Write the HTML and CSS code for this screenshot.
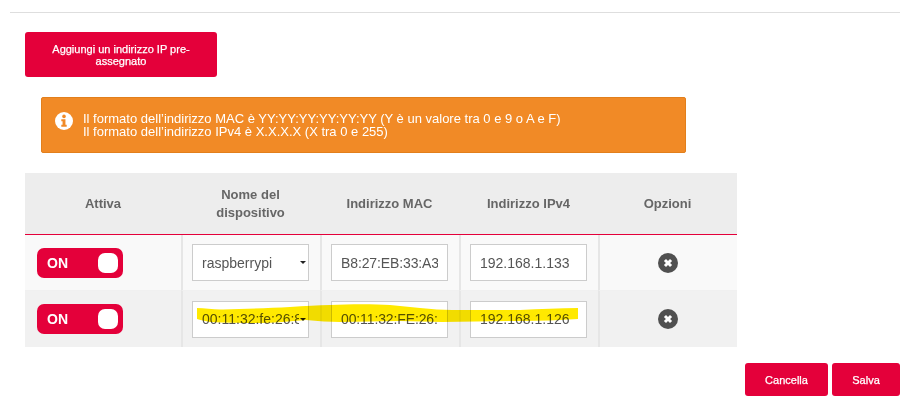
FILE: index.html
```html
<!DOCTYPE html>
<html lang="it">
<head>
<meta charset="utf-8">
<title>Indirizzi IP pre-assegnati</title>
<link rel="stylesheet" href="styles.css">
</head>
<body>
<div class="page">
  <hr class="rule">
  <button class="btn btn-add" type="button">Aggiungi un indirizzo IP pre-assegnato</button>
  <div class="alert">
    <svg class="alert-icon" viewBox="0 0 20 20" width="18" height="18" aria-hidden="true">
      <circle cx="10" cy="10" r="10" fill="#fff"/>
      <circle cx="10" cy="4.9" r="2" fill="#f18a26"/>
      <path d="M7 8h4.6v6.2H13V16.4H7v-2.2h1.4V10.2H7z" fill="#f18a26"/>
    </svg>
    <p class="alert-text">Il formato dell’indirizzo MAC è YY:YY:YY:YY:YY:YY (Y è un valore tra 0 e 9 o A e F)<br>Il formato dell’indirizzo IPv4 è X.X.X.X (X tra 0 e 255)</p>
  </div>
  <table class="devices">
    <colgroup>
      <col class="c-active"><col class="c-name"><col class="c-mac"><col class="c-ip"><col class="c-opt">
    </colgroup>
    <thead>
      <tr>
        <th>Attiva</th>
        <th>Nome del dispositivo</th>
        <th>Indirizzo MAC</th>
        <th>Indirizzo IPv4</th>
        <th>Opzioni</th>
      </tr>
    </thead>
    <tbody>
      <tr>
        <td class="cell-toggle"><span class="toggle"><span class="toggle-label">ON</span><span class="knob"></span></span></td>
        <td><span class="select-wrap"><select class="field field-select"><option>raspberrypi</option></select></span></td>
        <td><input class="field field-mac" type="text" value="B8:27:EB:33:A3"></td>
        <td><input class="field" type="text" value="192.168.1.133"></td>
        <td class="cell-opt"><svg class="remove" viewBox="0 0 20 20" width="20" height="20" aria-hidden="true"><circle cx="10" cy="10" r="10" fill="#505050"/><path d="M5.9 8 8 5.9l2 2 2-2L14.1 8l-2 2 2 2-2.1 2.1-2-2-2 2L5.9 12l2-2z" fill="#fff"/></svg></td>
      </tr>
      <tr>
        <td class="cell-toggle"><span class="toggle"><span class="toggle-label">ON</span><span class="knob"></span></span></td>
        <td><span class="select-wrap"><select class="field field-select"><option>00:11:32:fe:26:8f</option></select></span></td>
        <td><input class="field field-mac" type="text" value="00:11:32:FE:26:8F"></td>
        <td><input class="field" type="text" value="192.168.1.126"></td>
        <td class="cell-opt"><svg class="remove" viewBox="0 0 20 20" width="20" height="20" aria-hidden="true"><circle cx="10" cy="10" r="10" fill="#505050"/><path d="M5.9 8 8 5.9l2 2 2-2L14.1 8l-2 2 2 2-2.1 2.1-2-2-2 2L5.9 12l2-2z" fill="#fff"/></svg></td>
      </tr>
    </tbody>
  </table>
  <div class="actions">
    <button class="btn btn-cancel" type="button">Cancella</button>
    <button class="btn btn-save" type="button">Salva</button>
  </div>
  <svg class="marker" viewBox="0 0 909 417" width="909" height="417" aria-hidden="true">
    <path class="marker-stroke" d="M197 308C205 308 215 310 223 309.5 245 309 270 308 290 307 305 306 318 305 330 305 350 304 375 304 390 305 400 306 410 307 420 308 432 309 442 310 452 310 475 310 500 310 520 310 540 309 560 308 578 308L578 319C560 320 540 321 520 321 495 321 468 322 442 322 428 322 414 321 400 321 380 321 360 322 340 322 330 322 318 321 306 320 290 321 275 323 260 323 243 323 226 323 210 322 205 321 200 320 197 319Z"/>
  </svg>
</div>
</body>
</html>
```
FILE: styles.css
```css
* { box-sizing: border-box; }
html, body { margin: 0; background: #fff; }
body { font-family: "Liberation Sans", Arial, sans-serif; color: #666; }
.page { position: relative; width: 909px; height: 417px; padding: 12px 9px 0 10px; overflow: hidden; }
.rule { margin: 0; border: 0; border-top: 1px solid #dedede; height: 1px; }
.btn { border: 0; border-radius: 3px; background: #e4003a; color: #fff; font: 11px/12px "Liberation Sans", Arial, sans-serif; -webkit-text-stroke: .25px #fff; text-align: center; padding: 0; }
.btn-add { display: block; width: 192px; height: 45px; margin: 19px 0 0 15px; padding: 0 20px; }
.alert { display: flex; align-items: center; gap: 10px; width: 645px; height: 56px; margin: 20px 0 0 31px; padding: 0 13px; background: #f18a26; border: 1px solid #e27f1c; border-radius: 2px; color: #fff; }
.alert-icon { flex: none; margin-top: -9px; }
.alert-text { margin: 0; font-size: 13px; line-height: 13px; }
.devices { width: 712px; height: 174px; margin: 20px 0 0 15px; border-collapse: separate; border-spacing: 0; table-layout: fixed; font-size: 13px; }
.c-active { width: 156px; }
.c-name, .c-mac, .c-ip, .c-opt { width: 139px; }
.devices thead tr { height: 62px; }
.devices th { padding: 0 20px; background: #ededed; border-bottom: 1px solid #e4003a; font-weight: bold; font-size: 13px; line-height: 18px; color: #666; text-align: center; }
.devices tbody tr { height: 56px; }
.devices td { padding: 0 9px; background: #f9f9f9; border-bottom: 1px solid #f0f0f0; text-align: center; vertical-align: middle; }
.devices td + td { border-left: 2px solid #e6e6e6; }
.devices tbody tr + tr td { background: #f1f1f1; border-bottom: 0; }
.devices .cell-toggle { padding: 0 0 0 12px; text-align: left; }
.devices .cell-opt { padding: 0 11px 0 9px; }
.toggle { display: flex; align-items: center; justify-content: space-between; width: 86px; height: 30px; padding: 0 5px 0 10px; border-radius: 7px; background: #e4003a; color: #fff; font-size: 14px; font-weight: bold; }
.knob { width: 20px; height: 20px; border-radius: 7px; background: #fff; }
.field { display: block; width: 117px; height: 37px; padding: 0 9px; border: 1px solid #ccc; border-radius: 0; background: #fff; color: #555; font: 14px "Liberation Sans", Arial, sans-serif; }
.field-mac { letter-spacing: -.12px; }
.select-wrap { position: relative; display: block; width: 117px; }
.field-select { appearance: none; -webkit-appearance: none; padding-right: 9px; }
.select-wrap::after { content: ""; position: absolute; right: 3px; top: 17px; border: 3px solid transparent; border-top: 3px solid #222; border-bottom: 0; }
.cell-opt .remove { display: block; margin: 0 auto; }
.actions { display: flex; justify-content: flex-end; gap: 4px; margin-top: 16px; }
.btn-cancel { width: 83px; height: 33px; }
.btn-save { width: 68px; height: 33px; }
.marker { position: absolute; left: 0; top: 0; pointer-events: none; }
.marker-stroke { fill: #ffe900; mix-blend-mode: multiply; }
```
